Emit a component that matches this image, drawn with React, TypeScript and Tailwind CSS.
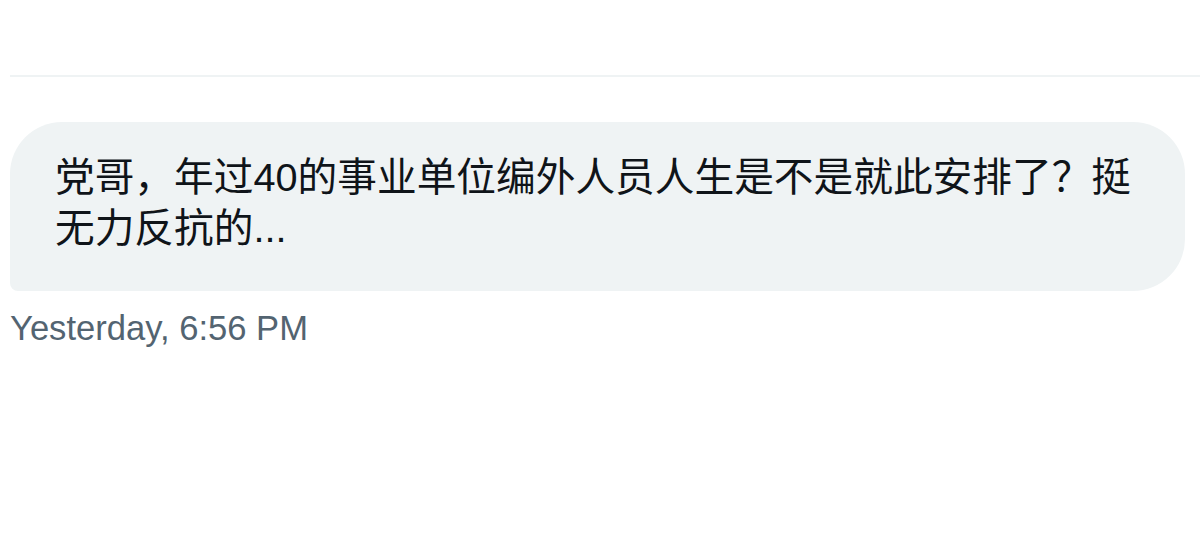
import React from "react";

export default function App() {
  return (
    <div className="w-[1200px] h-[547px] bg-white overflow-hidden pt-[75px]">
      {/* divider above the conversation */}
      <div className="ml-[10px] h-[2px] bg-[#eff3f4]" />

      <div className="ml-[10px] mt-[45px] w-[1175px]">
        {/* received message bubble */}
        <div className="bg-[#eff3f4] rounded-[52px] rounded-bl-[8px] pl-[45px] pr-[40px] pt-[30px] pb-[37px]">
          <p
            className="text-[39.7px] leading-[51px] text-[#0f1419]"
            style={{ fontFamily: '"Liberation Sans", "Noto Sans CJK SC", sans-serif' }}
          >
            党哥，年过40的事业单位编外人员人生是不是就此安排了？挺无力反抗的...
          </p>
        </div>

        <div
          className="mt-[17px] text-[34.6px] leading-[40px] text-[#536471]"
          style={{ fontFamily: '"Liberation Sans", Arial, sans-serif' }}
        >
          Yesterday, 6:56 PM
        </div>
      </div>
    </div>
  );
}
